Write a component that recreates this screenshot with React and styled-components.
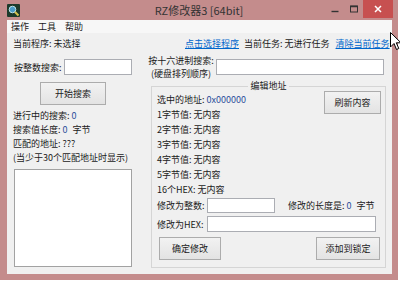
import styled, { createGlobalStyle } from "styled-components";

const GlobalStyle = createGlobalStyle`
    body {
        margin: 0;
        background: #ffffff;
        overflow: hidden;
        font-family: "Noto Sans CJK SC", "Noto Sans", sans-serif;
        font-size: 9px;
        color: #1a1a1a;
    }
`

const Frame = styled.div`
    position: relative;
    width: 398px;
    height: 280px;
    box-sizing: border-box;
    padding: 0 6px 6px 7px;
    background: #c48c8c;
    display: flex;
    flex-direction: column;
`

const TitleBar = styled.div`
    height: 20px;
    margin: 0 -6px 0 -7px;
    display: grid;
    grid-template-columns: 1fr auto 1fr;
    align-items: start;
`

const IconCell = styled.div`
    padding: 4px 0 0 7px;
    line-height: 0;
`

const Title = styled.div`
    font-size: 11px;
    line-height: 20px;
    color: #333;
    white-space: nowrap;
`

const Caption = styled.div`
    justify-self: end;
    display: flex;
    padding-right: 5px;
`

const CapButton = styled.div`
    width: ${p => p.$w}px;
    height: 18px;
    display: flex;
    align-items: center;
    justify-content: center;
    background: ${p => p.$close ? "#c75050" : "transparent"};
`

const Client = styled.div`
    flex: 1;
    background: #f0f0f0;
    display: flex;
    flex-direction: column;
`

const MenuBar = styled.div`
    height: 13px;
    line-height: 13px;
    display: flex;
    gap: 9px;
    padding-left: 4px;
    background: #f7f7f7;
`

const Body = styled.div`
    display: flex;
    flex-direction: column;
    padding: 5px 0 0 6px;
`

const TopRow = styled.div`
    display: flex;
    align-items: center;
    height: 12px;
    line-height: 12px;
    white-space: nowrap;
`

const Program = styled.span`
    width: 172px;
`

const Link = styled.span`
    color: #0066cc;
    text-decoration: underline;
    margin-right: ${p => p.$mr || 0}px;
`

const Task = styled.span`
    margin-right: 6px;
`

const Main = styled.div`
    display: flex;
    gap: 16px;
    margin-top: 9px;
`

const LeftCol = styled.div`
    width: 119px;
    display: flex;
    flex-direction: column;
`

const RightCol = styled.div`
    width: 238px;
    display: flex;
    flex-direction: column;
`

const Row = styled.div`
    display: flex;
    align-items: center;
    height: ${p => p.$h || 16}px;
    margin-top: ${p => p.$mt || 0}px;
    padding-left: ${p => p.$pl || 0}px;
    justify-content: ${p => p.$between ? "space-between" : "flex-start"};
    white-space: nowrap;
`

const Input = styled.input`
    width: ${p => p.$w}px;
    height: ${p => p.$h || 16}px;
    box-sizing: border-box;
    margin: 0;
    padding: 0 2px;
    border: 1px solid #abadb3;
    background: #fff;
    font: inherit;
    outline: none;
`

const Button = styled.button`
    width: ${p => p.$w}px;
    height: 23px;
    margin: ${p => p.$m || 0};
    padding: 0;
    border: 1px solid #acacac;
    border-radius: 0;
    background: linear-gradient(#f2f2f2, #e3e3e3);
    font: inherit;
    color: #1a1a1a;
    flex-shrink: 0;
`

const Lines = styled.div`
    line-height: ${p => p.$lh}px;
    margin-top: ${p => p.$mt || 0}px;
    white-space: nowrap;
`

const Num = styled.span`
    color: #2a4f9a;
    margin-right: ${p => p.$gap || 0}px;
`

const ListBox = styled.div`
    width: 118px;
    height: 98px;
    box-sizing: border-box;
    margin: 4px 0 0 1px;
    border: 1px solid #a2a2a2;
    background: #fff;
`

const HexLabel = styled.div`
    width: 66px;
    margin-right: 2px;
    text-align: center;
    line-height: 13px;
`

const Group = styled.fieldset`
    width: 235px;
    box-sizing: border-box;
    margin: 6px 0 0 3px;
    padding: 1px 5px 7px 5px;
    min-width: 0;
    border: 1px solid #d5d5d5;
`

const Legend = styled.legend`
    margin: 0 auto;
    padding: 0 2px;
    line-height: 10px;
    font-size: 9px;
`

const GroupTop = styled.div`
    display: flex;
    justify-content: space-between;
    align-items: flex-start;
`

const FieldLabel = styled.span`
    width: 50px;
`

const LenText = styled.span`
    margin-left: 13px;
`

const ButtonRow = styled.div`
    display: flex;
    justify-content: space-between;
    margin-top: 5px;
    padding-left: 2px;
`

const Cursor = styled.svg`
    position: absolute;
    left: 390px;
    top: 32px;
`

const AppIcon = () => (
    <svg width="13" height="13" viewBox="0 0 13 13">
        <rect width="13" height="13" rx="1" fill="#1d3a2b" />
        <circle cx="5.5" cy="5.5" r="3.3" fill="#4b9cc8" stroke="#bfe3e8" strokeWidth="1" />
        <line x1="8" y1="8" x2="11.5" y2="11.5" stroke="#d6c24c" strokeWidth="2" />
    </svg>
)

const fields = ["1字节值", "2字节值", "3字节值", "4字节值", "5字节值"]

const App = () => {
    return (
        <>
            <GlobalStyle />
            <Frame>
                <TitleBar>
                    <IconCell><AppIcon /></IconCell>
                    <Title>RZ修改器3 [64bit]</Title>
                    <Caption>
                        <CapButton $w={19}>
                            <svg width="8" height="8" viewBox="0 0 8 8">
                                <line x1="0.5" y1="6.5" x2="7.5" y2="6.5" stroke="#333" strokeWidth="1.4" />
                            </svg>
                        </CapButton>
                        <CapButton $w={19}>
                            <svg width="8" height="8" viewBox="0 0 8 8">
                                <rect x="0.5" y="1" width="7" height="6" fill="none" stroke="#333" strokeWidth="1" />
                                <line x1="0.5" y1="1.5" x2="7.5" y2="1.5" stroke="#333" strokeWidth="1.5" />
                            </svg>
                        </CapButton>
                        <CapButton $w={30} $close>
                            <svg width="8" height="8" viewBox="0 0 8 8">
                                <path d="M1 1 L7 7 M7 1 L1 7" stroke="#fff" strokeWidth="1.5" />
                            </svg>
                        </CapButton>
                    </Caption>
                </TitleBar>
                <Client>
                    <MenuBar>
                        <span>操作</span>
                        <span>工具</span>
                        <span>帮助</span>
                    </MenuBar>
                    <Body>
                        <TopRow>
                            <Program>当前程序: 未选择</Program>
                            <Link $mr={5}>点击选择程序</Link>
                            <Task>当前任务: 无进行任务</Task>
                            <Link>清除当前任务</Link>
                        </TopRow>
                        <Main>
                            <LeftCol>
                                <Row $between $pl={1}>
                                    <span>按整数搜索:</span>
                                    <Input $w={68} />
                                </Row>
                                <Button $w={66} $m="7px 0 0 27px">开始搜索</Button>
                                <Lines $lh={14} $mt={4}>
                                    <div>进行中的搜索: <Num>0</Num></div>
                                    <div>搜索值长度: <Num $gap={3}>0</Num> 字节</div>
                                    <div>匹配的地址: ???</div>
                                    <div>(当少于30个匹配地址时显示)</div>
                                </Lines>
                                <ListBox />
                            </LeftCol>
                            <RightCol>
                                <Row>
                                    <HexLabel>
                                        <div>按十六进制搜索:</div>
                                        <div>(硬盘排列顺序)</div>
                                    </HexLabel>
                                    <Input $w={168} />
                                </Row>
                                <Group>
                                    <Legend>编辑地址</Legend>
                                    <GroupTop>
                                        <Lines $lh={15}>
                                            <div>选中的地址: <Num>0x000000</Num></div>
                                            {fields.map(f => (
                                                <div key={f}>{f}: 无内容</div>
                                            ))}
                                            <div>16个HEX: 无内容</div>
                                        </Lines>
                                        <Button $w={57} $m="-1px -1px 0 0">刷新内容</Button>
                                    </GroupTop>
                                    <Row $h={15} $mt={1}>
                                        <FieldLabel>修改为整数:</FieldLabel>
                                        <Input $w={68} $h={15} />
                                        <LenText>修改的长度是: <Num $gap={3}>0</Num> 字节</LenText>
                                    </Row>
                                    <Row $mt={3}>
                                        <FieldLabel>修改为HEX:</FieldLabel>
                                        <Input $w={169} />
                                    </Row>
                                    <ButtonRow>
                                        <Button $w={62}>确定修改</Button>
                                        <Button $w={64}>添加到锁定</Button>
                                    </ButtonRow>
                                </Group>
                            </RightCol>
                        </Main>
                    </Body>
                </Client>
                <Cursor width="12" height="19" viewBox="0 0 12 19">
                    <path d="M0.5 0.5 L0.5 15 L4 11.5 L6.5 17.5 L8.8 16.5 L6.3 10.8 L11 10.8 Z" fill="#fff" stroke="#000" strokeWidth="1" />
                </Cursor>
            </Frame>
        </>
    )
}

export default App;
